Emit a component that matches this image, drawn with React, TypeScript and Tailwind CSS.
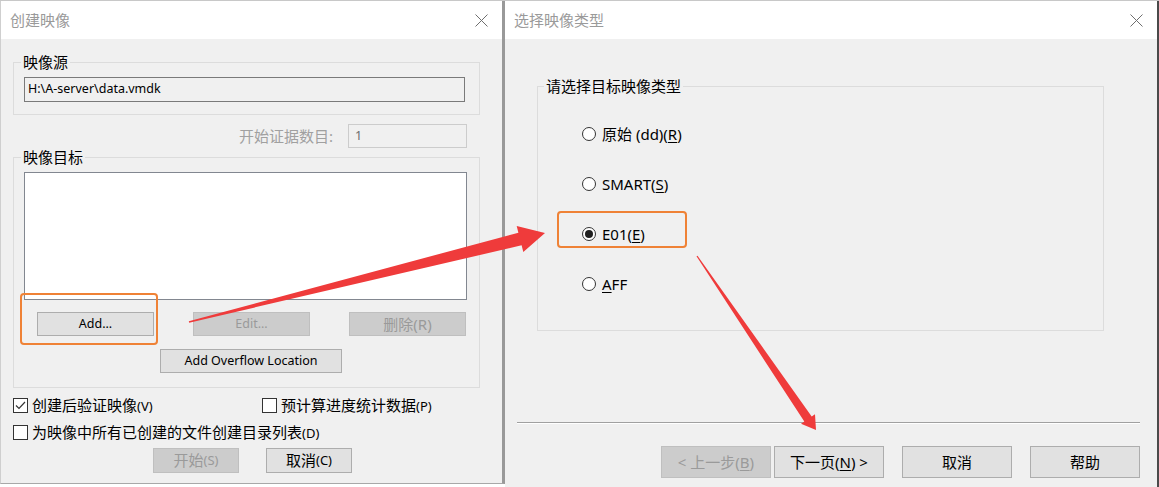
import type { ReactNode } from "react";

function CloseIcon() {
  return (
    <svg width="13" height="13" viewBox="0 0 13 13">
      <path d="M0.5 0.5L12.5 12.5M12.5 0.5L0.5 12.5" stroke="#6e6e6e" strokeWidth="1" fill="none" />
    </svg>
  );
}

function TitleBar({ title, pl }: { title: string; pl: string }) {
  return (
    <div className={`h-[38px] bg-white flex items-center justify-between pr-[14px] ${pl}`}>
      <span className="text-[15px] text-[#9a9a9a]">{title}</span>
      <CloseIcon />
    </div>
  );
}

function Btn({ children, disabled, className = "" }: { children: ReactNode; disabled?: boolean; className?: string }) {
  return (
    <button
      className={`flex items-center justify-center border ${
        disabled ? "bg-[#cccccc] border-[#bfbfbf] text-[#9a9a9a]" : "bg-[#e1e1e1] border-[#adadad] text-black"
      } ${className}`}
    >
      {children}
    </button>
  );
}

function Check({ checked }: { checked?: boolean }) {
  return (
    <span className="w-[15px] h-[15px] shrink-0 border border-[#333333] bg-white flex items-center justify-center">
      {checked && (
        <svg width="13" height="13" viewBox="0 0 13 13">
          <path d="M2 6.5L5 9.5L11 3" stroke="#333333" strokeWidth="1.2" fill="none" />
        </svg>
      )}
    </span>
  );
}

function Radio({ checked }: { checked?: boolean }) {
  return (
    <span className="w-[14px] h-[14px] shrink-0 rounded-full border border-[#333333] bg-white flex items-center justify-center">
      {checked && <span className="w-[8px] h-[8px] rounded-full bg-[#1f1f1f]" />}
    </span>
  );
}

const U = ({ c }: { c: string }) => <span className="underline underline-offset-2">{c}</span>;

function CreateImageDialog() {
  return (
    <div className="w-[505px] h-[483px] shrink-0 bg-[#f0f0f0] border-l border-l-[#cfcfcf] border-r-[3px] border-r-[#999999] border-b border-b-[#a8a8a8] flex flex-col">
      <TitleBar title="创建映像" pl="pl-[9px]" />
      <div className="flex flex-col pl-[12px] pt-[13px]">
        {/* 映像源 */}
        <fieldset className="w-[467px] border border-[#dcdcdc]">
          <legend className="ml-[7px] px-[2px] text-[15px] leading-[20px]">映像源</legend>
          <div className="pl-[10px] pt-[5px] pb-[12px]">
            <div className="w-[441px] h-[25px] border border-[#7a7a7a] flex items-center pl-[3px] text-[12.5px]">
              H:\A-server\data.vmdk
            </div>
          </div>
        </fieldset>

        <div className="mt-[9px] w-[467px] h-[24px] pr-[13px] flex items-center justify-end">
          <span className="mr-[15px] text-[#a0a0a0]">开始证据数目:</span>
          <div className="w-[119px] h-[24px] border border-[#cccccc] flex items-center pl-[6px] text-[12.5px] text-[#6d6d6d]">1</div>
        </div>

        {/* 映像目标 */}
        <fieldset className="w-[467px] border border-[#dcdcdc]">
          <legend className="ml-[7px] px-[2px] text-[15px] leading-[18px]">映像目标</legend>
          <div className="pl-[10px] pt-[6px] pb-[14px] flex flex-col">
            <div className="w-[443px] h-[128px] bg-white border border-[#828790]" />
            <div className="mt-[12px] pl-[13px] flex gap-[39px] text-[12.5px]">
              <Btn className="w-[117px] h-[24px]">Add...</Btn>
              <Btn disabled className="w-[117px] h-[24px]">Edit...</Btn>
              <Btn disabled className="w-[117px] h-[24px] text-[15px]">删除(R)</Btn>
            </div>
            <Btn className="mt-[13px] ml-[136px] w-[182px] h-[24px] text-[12.5px]">Add Overflow Location</Btn>
          </div>
        </fieldset>

        <div className="mt-[7px] h-[20px] flex items-center">
          <div className="w-[249px] flex items-center gap-[4px]">
            <Check checked />
            <span>创建后验证映像<span className="text-[13px]">(V)</span></span>
          </div>
          <div className="flex items-center gap-[4px]">
            <Check />
            <span>预计算进度统计数据<span className="text-[13px]">(P)</span></span>
          </div>
        </div>
        <div className="mt-[7px] h-[20px] flex items-center gap-[4px]">
          <Check />
          <span>为映像中所有已创建的文件创建目录列表<span className="text-[13px]">(D)</span></span>
        </div>

        <div className="mt-[6px] pl-[140px] flex gap-[27px]">
          <Btn disabled className="w-[86px] h-[25px]">开始<span className="text-[13px]">(S)</span></Btn>
          <Btn className="w-[86px] h-[25px]">取消<span className="text-[13px]">(C)</span></Btn>
        </div>
      </div>
    </div>
  );
}

const TYPES: { label: ReactNode; checked?: boolean }[] = [
  { label: <>原始 (dd)(<U c="R" />)</> },
  { label: <>SMART(<U c="S" />)</> },
  { label: <>E01(<U c="E" />)</>, checked: true },
  { label: <><U c="A" />FF</> },
];

function ImageTypeDialog() {
  return (
    <div className="flex-1 h-[487px] bg-[#f0f0f0] border-r-2 border-r-[#4a4a4a] flex flex-col">
      <TitleBar title="选择映像类型" pl="pl-[9px]" />
      <fieldset className="ml-[32px] mt-[37px] w-[567px] border border-[#dcdcdc]">
        <legend className="ml-[6px] px-[2px] text-[15px] leading-[20px]">请选择目标映像类型</legend>
        <div className="pl-[44px] pt-[28px] pb-[36px] flex flex-col gap-[30px]">
          {TYPES.map((t, i) => (
            <div key={i} className="h-[20px] flex items-center gap-[6px]">
              <Radio checked={t.checked} />
              <span>{t.label}</span>
            </div>
          ))}
        </div>
      </fieldset>

      <div className="mt-[91px] ml-[12px] mr-[17px] h-[2px] border-t border-t-[#a0a0a0] border-b border-b-white" />

      <div className="mt-[22px] pr-[17px] flex justify-end">
        <Btn disabled className="w-[110px] h-[32px]">&lt; 上一步(<U c="B" />)</Btn>
        <Btn className="ml-[3px] w-[110px] h-[32px]">下一页(<U c="N" />) &gt;</Btn>
        <Btn className="ml-[18px] w-[110px] h-[32px]">取消</Btn>
        <Btn className="ml-[18px] w-[110px] h-[32px]">帮助</Btn>
      </div>
    </div>
  );
}

export default function App() {
  return (
    <div className="relative w-[1159px] h-[487px] overflow-hidden flex bg-white border-t border-t-[#c8c8c8] font-['Noto_Sans','Noto_Sans_CJK_SC',sans-serif] text-[15px] text-black">
      <CreateImageDialog />
      <ImageTypeDialog />

      {/* annotation overlay: highlight boxes and arrows */}
      <svg className="absolute inset-0 pointer-events-none" width="1159" height="487" viewBox="0 0 1159 487">
        <rect x="21" y="293" width="136" height="50" rx="3" fill="none" stroke="#ef8236" strokeWidth="2" />
        <rect x="558" y="211" width="128" height="35" rx="3" fill="none" stroke="#ef8236" strokeWidth="2" />
        <polygon
          fill="#ef3b3b"
          points="188.8,320.3 518.4,231.7 516.7,224.9 545,232 523.3,251.1 521.6,244.3 189.2,321.7"
        />
        <polygon
          fill="#ef3b3b"
          points="697.5,254.7 811.7,415.5 815,413.2 816,429 801,422.8 804.3,420.5 696.5,255.3"
        />
      </svg>
    </div>
  );
}
